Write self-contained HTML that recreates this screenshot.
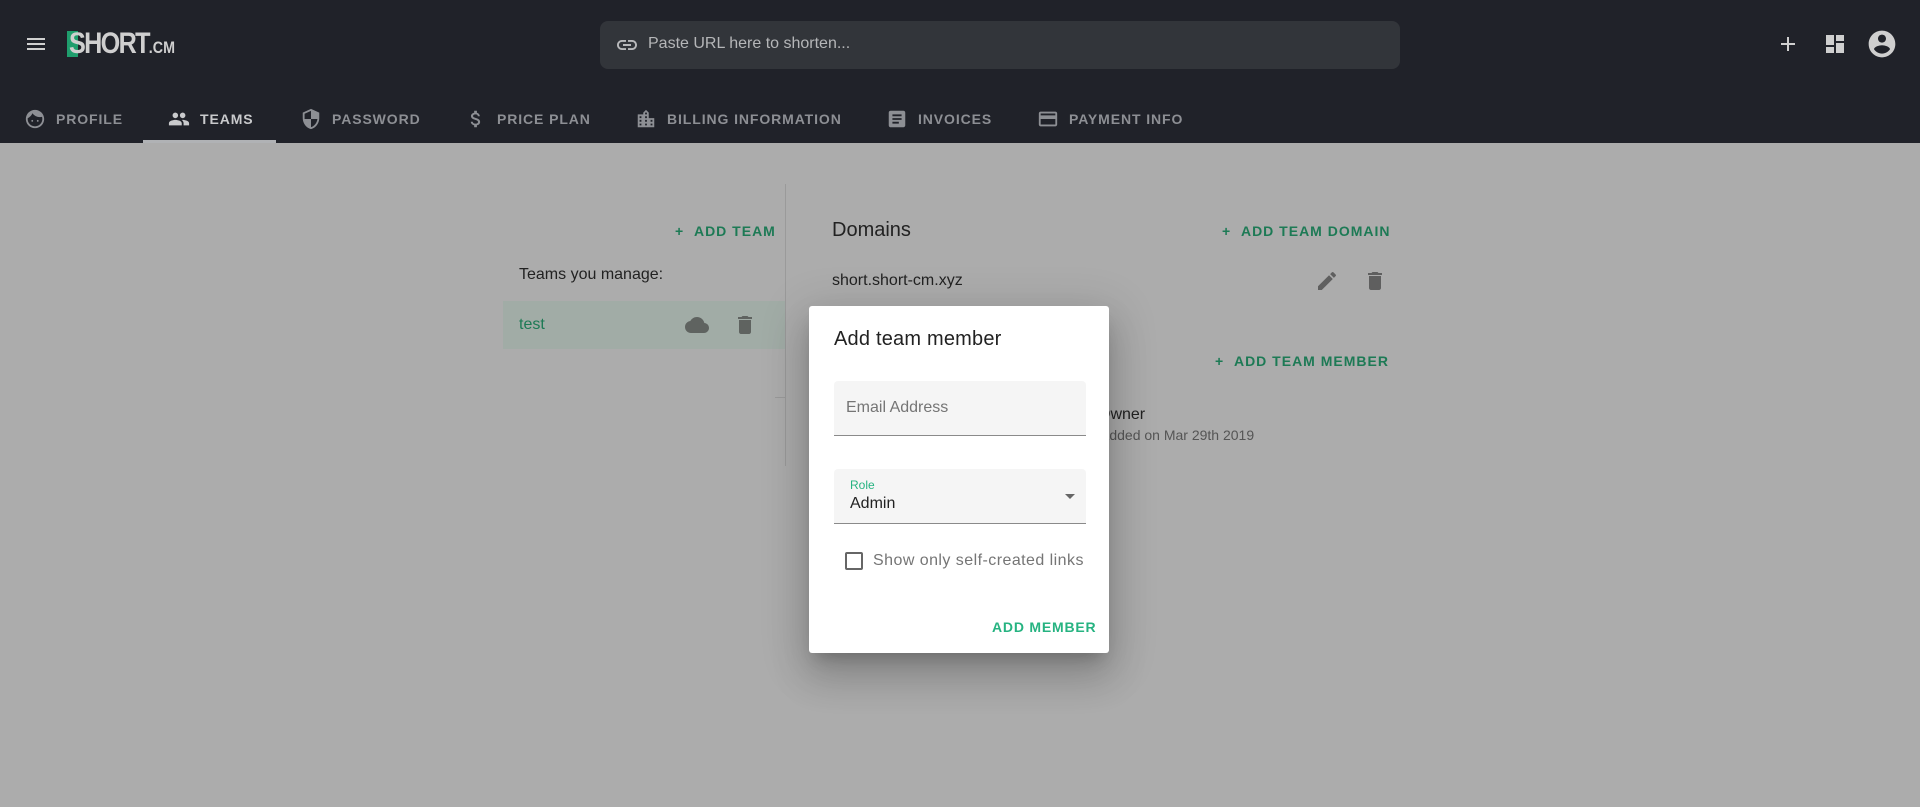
<!DOCTYPE html>
<html><head><meta charset="utf-8"><style>
*{margin:0;padding:0;box-sizing:border-box}
body{width:1920px;height:807px;overflow:hidden;background:#acacac;font-family:"Liberation Sans",Roboto,sans-serif;position:relative}
.abs{position:absolute}
.hdr{left:0;top:0;width:1920px;height:143px;background:#202229}
.tab{position:absolute;top:108px;height:22px;display:flex;align-items:center;gap:10px;color:#8d8f94;font-weight:bold;font-size:14px;letter-spacing:.9px}
.tab svg{width:22px;height:22px;fill:#8d8f94}
.green{color:#1d7a55;font-weight:bold;font-size:14px;letter-spacing:1px}
.t{color:#222;font-size:16px}
</style></head><body>
<div class="abs hdr"></div>
<svg class="abs" style="left:24px;top:32px" width="24" height="24" viewBox="0 0 24 24"><path d="M3 6h18v2H3zm0 5h18v2H3zm0 5h18v2H3z" fill="#d0d0d0"/></svg>
<div class="abs" style="left:67px;top:31px;width:11px;height:26px;background:#1f9e6d"></div>
<div class="abs" style="left:69px;top:27px;font-size:30px;font-weight:bold;color:#cfcfcf;letter-spacing:-2px;transform:scaleX(0.84);transform-origin:left top">SHORT<span style="font-size:17px;letter-spacing:0">.CM</span></div>
<div class="abs" style="left:600px;top:21px;width:800px;height:48px;background:#32353a;border-radius:8px"></div>
<svg class="abs" style="left:615px;top:33px" width="24" height="24" viewBox="0 0 24 24"><path fill="#b9babc" d="M3.9 12c0-1.71 1.39-3.1 3.1-3.1h4V7H7c-2.76 0-5 2.24-5 5s2.24 5 5 5h4v-1.9H7c-1.71 0-3.1-1.39-3.1-3.1zM8 13h8v-2H8v2zm9-6h-4v1.9h4c1.71 0 3.1 1.39 3.1 3.1s-1.39 3.1-3.1 3.1h-4V17h4c2.76 0 5-2.24 5-5s-2.24-5-5-5z"/></svg>
<div class="abs" style="left:648px;top:35px;font-size:16px;color:#b5b6b8">Paste URL here to shorten...</div>
<svg class="abs" style="left:1776px;top:32px" width="24" height="24" viewBox="0 0 24 24"><path fill="#cfcfcf" d="M19 13h-6v6h-2v-6H5v-2h6V5h2v6h6v2z"/></svg>
<svg class="abs" style="left:1823px;top:32px" width="24" height="24" viewBox="0 0 24 24"><path fill="#cfcfcf" d="M3 13h8V3H3v10zm0 8h8v-6H3v6zm10 0h8V11h-8v10zm0-18v6h8V3h-8z"/></svg>
<svg class="abs" style="left:1866px;top:28px" width="32" height="32" viewBox="0 0 24 24"><path fill="#cfcfcf" d="M12 2C6.48 2 2 6.48 2 12s4.48 10 10 10 10-4.48 10-10S17.52 2 12 2zm0 3c1.66 0 3 1.34 3 3s-1.34 3-3 3-3-1.34-3-3 1.34-3 3-3zm0 14.2c-2.5 0-4.71-1.28-6-3.22.03-1.99 4-3.08 6-3.08 1.99 0 5.97 1.09 6 3.08-1.29 1.94-3.5 3.22-6 3.22z"/></svg>
<div class="tab" style="left:24px"><svg viewBox="0 0 24 24"><path d="M12 2C6.48 2 2 6.48 2 12s4.48 10 10 10 10-4.48 10-10S17.52 2 12 2zm0 18c-4.41 0-8-3.59-8-8 0-.29.02-.58.05-.86 2.36-1.05 4.23-2.98 5.21-5.37C11.07 8.33 14.05 10 17.42 10c.78 0 1.53-.09 2.25-.26.21.71.33 1.47.33 2.26 0 4.41-3.59 8-8 8zM9 13a1 1 0 100 2 1 1 0 000-2zm6 0a1 1 0 100 2 1 1 0 000-2z"/></svg>PROFILE</div>
<div class="tab" style="left:168px;color:#c9cacc"><svg viewBox="0 0 24 24" style="fill:#c9cacc"><path d="M16 11c1.66 0 2.99-1.34 2.99-3S17.66 5 16 5c-1.66 0-3 1.34-3 3s1.34 3 3 3zm-8 0c1.66 0 2.99-1.34 2.99-3S9.66 5 8 5C6.34 5 5 6.34 5 8s1.34 3 3 3zm0 2c-2.33 0-7 1.17-7 3.5V19h14v-2.5c0-2.33-4.67-3.5-7-3.5zm8 0c-.29 0-.62.02-.97.05 1.16.84 1.97 1.97 1.97 3.45V19h6v-2.5c0-2.33-4.67-3.5-7-3.5z"/></svg>TEAMS</div>
<div class="abs" style="left:143px;top:140px;width:133px;height:3px;background:#b0b2b5"></div>
<div class="tab" style="left:300px"><svg viewBox="0 0 24 24"><path d="M12 1L3 5v6c0 5.55 3.84 10.74 9 12 5.16-1.26 9-6.45 9-12V5l-9-4zm0 10.99h7c-.53 4.12-3.28 7.79-7 8.94V12H5V6.3l7-3.11v8.8z"/></svg>PASSWORD</div>
<div class="tab" style="left:465px"><svg viewBox="0 0 24 24"><path d="M11.8 10.9c-2.27-.59-3-1.2-3-2.15 0-1.09 1.01-1.85 2.7-1.85 1.78 0 2.44.85 2.5 2.1h2.21c-.07-1.72-1.12-3.3-3.21-3.81V3h-3v2.16c-1.94.42-3.5 1.68-3.5 3.61 0 2.31 1.91 3.46 4.7 4.13 2.5.6 3 1.48 3 2.41 0 .69-.49 1.79-2.7 1.79-2.06 0-2.87-.92-2.98-2.1h-2.2c.12 2.19 1.76 3.42 3.68 3.83V21h3v-2.15c1.95-.37 3.5-1.5 3.5-3.55 0-2.84-2.43-3.81-4.7-4.4z"/></svg>PRICE PLAN</div>
<div class="tab" style="left:635px"><svg viewBox="0 0 24 24"><path d="M15 11V5l-3-3-3 3v2H3v14h18V11h-6zm-8 8H5v-2h2v2zm0-4H5v-2h2v2zm0-4H5V9h2v2zm6 8h-2v-2h2v2zm0-4h-2v-2h2v2zm0-4h-2V9h2v2zm0-4h-2V5h2v2zm6 12h-2v-2h2v2zm0-4h-2v-2h2v2z"/></svg>BILLING INFORMATION</div>
<div class="tab" style="left:886px"><svg viewBox="0 0 24 24"><path d="M19 3H5c-1.1 0-2 .9-2 2v14c0 1.1.9 2 2 2h14c1.1 0 2-.9 2-2V5c0-1.1-.9-2-2-2zm-5 14H7v-2h7v2zm3-4H7v-2h10v2zm0-4H7V7h10v2z"/></svg>INVOICES</div>
<div class="tab" style="left:1037px"><svg viewBox="0 0 24 24"><path d="M20 4H4c-1.11 0-1.99.89-1.99 2L2 18c0 1.11.89 2 2 2h16c1.11 0 2-.89 2-2V6c0-1.11-.89-2-2-2zm0 14H4v-6h16v6zm0-10H4V6h16v2z"/></svg>PAYMENT INFO</div>

<div class="abs green" style="left:675px;top:223px">+&nbsp;&nbsp;ADD TEAM</div>
<div class="abs t" style="left:519px;top:266px">Teams you manage:</div>
<div class="abs" style="left:503px;top:301px;width:282px;height:48px;background:#a1aca6"></div>
<div class="abs" style="left:519px;top:316px;font-size:16px;color:#1d7a55">test</div>
<svg class="abs" style="left:685px;top:313px" width="24" height="24" viewBox="0 0 24 24"><path fill="#5f6360" d="M19.35 10.04C18.67 6.59 15.64 4 12 4 9.11 4 6.6 5.64 5.35 8.04 2.34 8.36 0 10.91 0 14c0 3.31 2.69 6 6 6h13c2.76 0 5-2.24 5-5 0-2.64-2.05-4.78-4.65-4.96z"/></svg>
<svg class="abs" style="left:733px;top:313px" width="24" height="24" viewBox="0 0 24 24"><path fill="#5f6360" d="M6 19c0 1.1.9 2 2 2h8c1.1 0 2-.9 2-2V7H6v12zM19 4h-3.5l-1-1h-5l-1 1H5v2h14V4z"/></svg>
<div class="abs" style="left:785px;top:184px;width:1px;height:282px;background:#9a9a9a"></div>
<div class="abs" style="left:775px;top:397px;width:10px;height:1px;background:#9a9a9a"></div>

<div class="abs" style="left:832px;top:219px;font-size:20px;color:#222">Domains</div>
<div class="abs green" style="left:1222px;top:223px">+&nbsp;&nbsp;ADD TEAM DOMAIN</div>
<div class="abs" style="left:832px;top:272px;font-size:16px;color:#222">short.short-cm.xyz</div>
<svg class="abs" style="left:1315px;top:269px" width="24" height="24" viewBox="0 0 24 24"><path fill="#5f5f5f" d="M3 17.25V21h3.75L17.81 9.94l-3.75-3.75L3 17.25zM20.71 7.04a1 1 0 000-1.41l-2.34-2.34a1 1 0 00-1.41 0l-1.83 1.83 3.75 3.75 1.83-1.83z"/></svg>
<svg class="abs" style="left:1363px;top:269px" width="24" height="24" viewBox="0 0 24 24"><path fill="#5f5f5f" d="M6 19c0 1.1.9 2 2 2h8c1.1 0 2-.9 2-2V7H6v12zM19 4h-3.5l-1-1h-5l-1 1H5v2h14V4z"/></svg>
<div class="abs green" style="left:1215px;top:353px">+&nbsp;&nbsp;ADD TEAM MEMBER</div>
<div class="abs" style="left:1098px;top:406px;font-size:16px;color:#222">Owner</div>
<div class="abs" style="left:1100px;top:427px;font-size:14px;color:#555">Added on Mar 29th 2019</div>

<div class="abs" style="left:809px;top:306px;width:300px;height:347px;background:#fff;border-radius:3px;box-shadow:0 11px 15px -7px rgba(0,0,0,.2),0 24px 38px 3px rgba(0,0,0,.14),0 9px 46px 8px rgba(0,0,0,.12)"></div>
<div class="abs" style="left:834px;top:328px;font-size:20px;color:#222;letter-spacing:.2px">Add team member</div>
<div class="abs" style="left:834px;top:381px;width:252px;height:55px;background:#f5f5f5;border-bottom:1px solid #8a8a8a;border-radius:4px 4px 0 0"></div>
<div class="abs" style="left:846px;top:399px;font-size:16px;color:#757575">Email Address</div>
<div class="abs" style="left:834px;top:469px;width:252px;height:55px;background:#f5f5f5;border-bottom:1px solid #8a8a8a;border-radius:4px 4px 0 0"></div>
<div class="abs" style="left:850px;top:478px;font-size:12px;color:#26b381">Role</div>
<div class="abs" style="left:850px;top:495px;font-size:16px;color:#222">Admin</div>
<div class="abs" style="left:1065px;top:494px;width:0;height:0;border-left:5px solid transparent;border-right:5px solid transparent;border-top:5px solid #666"></div>
<div class="abs" style="left:845px;top:552px;width:18px;height:18px;border:2px solid #666;border-radius:2px"></div>
<div class="abs" style="left:873px;top:552px;font-size:16px;color:#757575;letter-spacing:.45px">Show only self-created links</div>
<div class="abs" style="left:992px;top:619px;font-size:14px;font-weight:bold;letter-spacing:.8px;color:#26b381">ADD MEMBER</div>
</body></html>
